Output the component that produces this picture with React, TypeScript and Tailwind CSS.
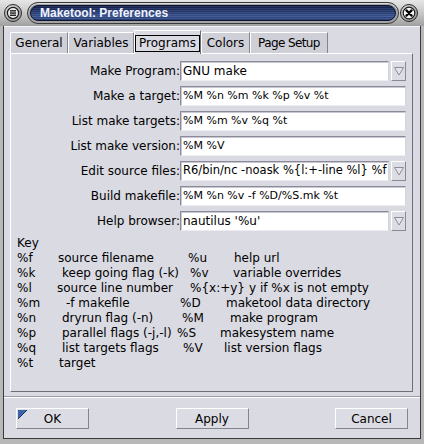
import React from 'react';

const tabs = [
  { label: 'General', w: 'w-[58px]' },
  { label: 'Variables', w: 'w-[66px]' },
  { label: 'Programs', w: 'w-[67px]', active: true },
  { label: 'Colors', w: 'w-[49px]' },
  { label: 'Page Setup', w: 'w-[78px] tracking-[-0.6px]' },
];

const fields = [
  { label: 'Make Program:', value: 'GNU make', combo: true, text: 'text-[12px]' },
  { label: 'Make a target:', value: '%M %n %m %k %p %v %t', text: 'text-[11px]' },
  { label: 'List make targets:', value: '%M %m %v %q %t', text: 'text-[11px]' },
  { label: 'List make version:', value: '%M %V', text: 'text-[11px]' },
  { label: 'Edit source files:', value: 'R6/bin/nc -noask %{l:+-line %l} %f', combo: true, text: 'text-[11.5px]' },
  { label: 'Build makefile:', value: '%M %n %v -f %D/%S.mk %t', text: 'text-[11px]' },
  { label: 'Help browser:', value: "nautilus '%u'", combo: true, text: 'text-[12px]' },
];

const MenuButton: React.FC = () => (
  <svg width="18" height="18" viewBox="0 0 18 18">
    <defs>
      <radialGradient id="mb" cx="40%" cy="35%" r="70%">
        <stop offset="0" stopColor="#f4f4f4" />
        <stop offset="1" stopColor="#8c8c8c" />
      </radialGradient>
    </defs>
    <circle cx="9" cy="9" r="8.5" fill="url(#mb)" stroke="#2c2c2c" strokeWidth="1" />
    <circle cx="9" cy="9" r="5.6" fill="#e8e8e8" stroke="#1a1a1a" strokeWidth="1.2" />
    <rect x="6" y="6.2" width="6" height="1.3" fill="#111" />
    <rect x="6" y="8.4" width="6" height="1.3" fill="#111" />
    <rect x="6" y="10.6" width="6" height="1.3" fill="#111" />
  </svg>
);

const CloseButton: React.FC = () => (
  <svg width="18" height="18" viewBox="0 0 18 18">
    <defs>
      <radialGradient id="cb" cx="40%" cy="35%" r="70%">
        <stop offset="0" stopColor="#f4f4f4" />
        <stop offset="1" stopColor="#8c8c8c" />
      </radialGradient>
    </defs>
    <circle cx="9" cy="9" r="8.5" fill="url(#cb)" stroke="#2c2c2c" strokeWidth="1" />
    <circle cx="9" cy="9" r="5.8" fill="#f8f8f8" stroke="#1a1a1a" strokeWidth="1.2" />
    <path d="M6.4 6.4 L11.6 11.6 M11.6 6.4 L6.4 11.6" stroke="#000" strokeWidth="2.2" strokeLinecap="round" />
  </svg>
);

const ComboArrow: React.FC = () => (
  <div className="w-[15px] h-[20px] bg-[#dcdce4] border border-t-white border-l-white border-r-[#8a8a96] border-b-[#8a8a96] flex items-center justify-center">
    <svg width="10" height="10" viewBox="0 0 10 10">
      <polygon points="0.5,1.5 9.5,1.5 5,9" fill="#e4e4ec" stroke="#8c8c98" strokeWidth="1" />
    </svg>
  </div>
);

const entryBox =
  'h-[20px] bg-white border border-t-[#8a8a98] border-l-[#8a8a98] border-r-[#d4d4dc] border-b-[#ececf2] shadow-[inset_1px_1px_0_#c8c8d2] flex items-center pl-[2px] overflow-hidden';

const Key: React.FC = () => (
  <div className="ml-[6px] mt-[5px] text-[12px] leading-[15px] text-black">
    <div className="h-[15px]">Key</div>
    <div className="flex h-[15px] whitespace-nowrap">
      <span className="w-[41px] shrink-0">%f</span>
      <span className="w-[130px] shrink-0">source filename</span>
      <span className="w-[46px] shrink-0">%u</span>
      <span>help url</span>
    </div>
    <div className="flex h-[15px] whitespace-nowrap">
      <span className="w-[45px] shrink-0">%k</span>
      <span className="w-[128px] shrink-0">keep going flag (-k)</span>
      <span className="w-[43px] shrink-0">%v</span>
      <span>variable overrides</span>
    </div>
    <div className="flex h-[15px] whitespace-nowrap">
      <span className="w-[40px] shrink-0">%l</span>
      <span className="w-[133px] shrink-0">source line number</span>
      <span className="shrink-0">%&#123;x:+y&#125;</span>
      <span className="ml-[4px]">y if %x is not empty</span>
    </div>
    <div className="flex h-[15px] whitespace-nowrap">
      <span className="w-[49px] shrink-0">%m</span>
      <span className="w-[114px] shrink-0">-f makefile</span>
      <span className="w-[46px] shrink-0">%D</span>
      <span>maketool data directory</span>
    </div>
    <div className="flex h-[15px] whitespace-nowrap">
      <span className="w-[45px] shrink-0">%n</span>
      <span className="w-[120px] shrink-0">dryrun flag (-n)</span>
      <span className="w-[48px] shrink-0">%M</span>
      <span>make program</span>
    </div>
    <div className="flex h-[15px] whitespace-nowrap">
      <span className="w-[45px] shrink-0">%p</span>
      <span className="w-[115px] shrink-0">parallel flags (-j,-l)</span>
      <span className="w-[43px] shrink-0">%S</span>
      <span>makesystem name</span>
    </div>
    <div className="flex h-[15px] whitespace-nowrap">
      <span className="w-[45px] shrink-0">%q</span>
      <span className="w-[121px] shrink-0">list targets flags</span>
      <span className="w-[41px] shrink-0">%V</span>
      <span>list version flags</span>
    </div>
    <div className="flex h-[15px] whitespace-nowrap">
      <span className="w-[42px] shrink-0">%t</span>
      <span>target</span>
    </div>
  </div>
);

const DialogButton: React.FC<{ label: string; isDefault?: boolean }> = ({ label, isDefault }) => (
  <button className="relative w-[73px] h-[21px] bg-[#dcdce4] border border-t-white border-l-white border-r-[#84848f] border-b-[#84848f] text-[12px] text-black flex items-center justify-center">
    {/* default button marker */}
    {isDefault && (
      <svg className="absolute left-[1px] top-[1px]" width="9" height="9" viewBox="0 0 9 9">
        <polygon points="0,0 9,0 0,9" fill="#3c64ac" />
        <polyline points="0,9 9,0" stroke="#1c2c5c" strokeWidth="1" fill="none" />
      </svg>
    )}
    {label}
  </button>
);

const App: React.FC = () => {
  return (
    <div className="w-[424px] h-[444px] bg-[#b8b8b8] overflow-hidden font-['DejaVu_Sans',sans-serif] text-black">
      {/* Title bar */}
      <div className="h-[26px] flex items-center bg-[linear-gradient(180deg,#e6e6e6,#c4c4c4_55%,#a0a0a0)]">
        <div className="ml-[4px] flex">
          <MenuButton />
        </div>
        <div className="ml-[5px] w-[372px] h-[22px] rounded-full bg-[#a4a4a4] border border-[#3a3a3a] p-[2px] shadow-[inset_0_1px_0_#dcdcdc]">
          <div className="h-full rounded-full border border-[#0c1430] bg-[image:repeating-linear-gradient(180deg,rgba(255,255,255,0.07)_0px,rgba(255,255,255,0.07)_1px,rgba(0,0,0,0.1)_1px,rgba(0,0,0,0.1)_2px),linear-gradient(180deg,#162250_0%,#24386e_35%,#3a5594_70%,#2c447e_100%)] flex items-center pl-[9px]">
            <span className="font-['Liberation_Sans',sans-serif] font-bold text-[12px] text-[#f0f2ff] leading-none">
              Maketool: Preferences
            </span>
          </div>
        </div>
        <div className="ml-[1px] flex">
          <CloseButton />
        </div>
      </div>

      {/* Window body */}
      <div className="ml-[3px] w-[418px] h-[413px] border-l border-r border-b border-[#3a3a3a]">
        <div className="h-full bg-[#dadae2] border-t border-t-[#f4f4f8] flex flex-col">
          {/* Tabs */}
          <div className="pl-[6px] pt-[3px] h-[26px] flex items-end">
            {tabs.map((t) =>
              t.active ? (
                <div
                  key={t.label}
                  className={`${t.w} h-[24px] mb-[-1px] relative z-10 bg-[#dadae2] border-t border-l border-t-white border-l-white border-r border-r-[#6e6e7a] flex items-center justify-center text-[12px]`}
                >
                  <span className="border border-black px-[3px] h-[17px] leading-[15px] mt-[1px]">{t.label}</span>
                </div>
              ) : (
                <div
                  key={t.label}
                  className={`${t.w} h-[21px] bg-[#cfcfd8] border-t border-l border-t-white border-l-white border-r border-r-[#84848f] flex items-center justify-center text-[12px]`}
                >
                  {t.label}
                </div>
              )
            )}
          </div>

          {/* Notebook page */}
          <div className="ml-[6px] w-[403px] h-[339px] border border-t-white border-l-white border-r-[#6e6e7a] border-b-[#6e6e7a]">
            <div className="pt-[7px] flex flex-col gap-[5px]">
              {fields.map((f) => (
                <div key={f.label} className="flex items-center h-[20px]">
                  <div className="w-[169px] text-right text-[12px] whitespace-nowrap">{f.label}</div>
                  {f.combo ? (
                    <div className="w-[226px] flex gap-[2px]">
                      <div className={`${entryBox} flex-1`}>
                        <span className={`${f.text} whitespace-nowrap`}>{f.value}</span>
                      </div>
                      <ComboArrow />
                    </div>
                  ) : (
                    <div className={`${entryBox} w-[226px]`}>
                      <span className={`${f.text} whitespace-nowrap`}>{f.value}</span>
                    </div>
                  )}
                </div>
              ))}
            </div>
            <Key />
          </div>

          {/* Separator */}
          <div className="mt-[4px] h-[1px] bg-[#9a9aa6]" />
          <div className="h-[1px] bg-white" />

          {/* Buttons */}
          <div className="mt-[10px] pl-[12px] pr-[12px] flex justify-between">
            <DialogButton label="OK" isDefault />
            <DialogButton label="Apply" />
            <DialogButton label="Cancel" />
          </div>
        </div>
      </div>
    </div>
  );
};

export default App;
